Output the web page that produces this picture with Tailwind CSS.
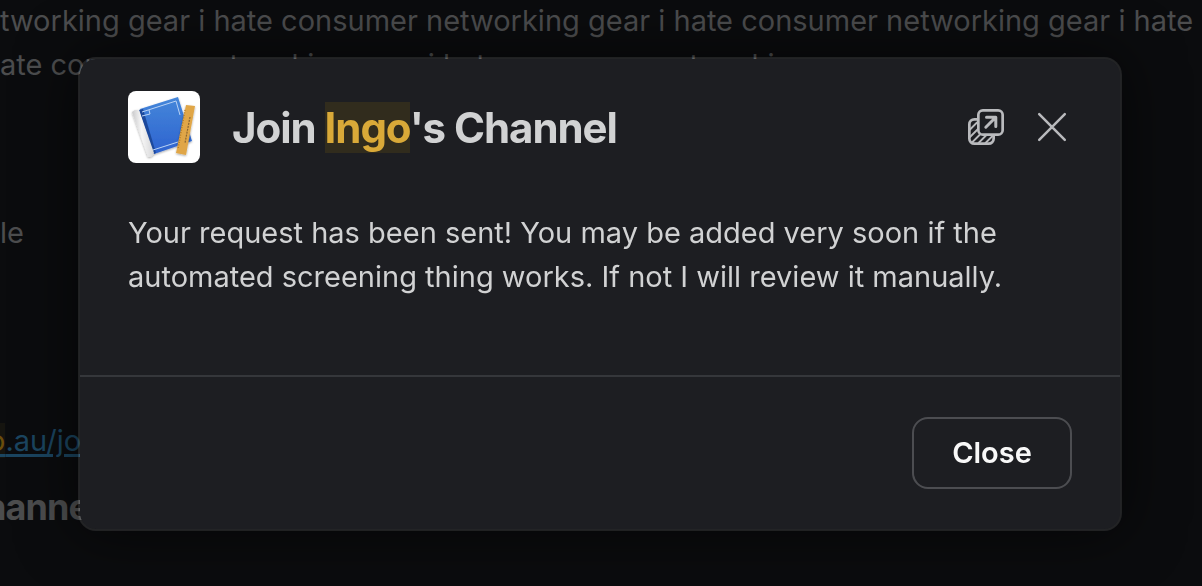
<!DOCTYPE html>
<html lang="en">

<head>
    <meta charset="UTF-8">
    <meta name="viewport" content="width=device-width, initial-scale=1.0">
    <title>Join Ingo's Channel</title>
    <script src="https://cdn.jsdelivr.net/npm/@tailwindcss/browser@4"></script>
</head>

<body class="bg-[#0b0c0e] font-['Inter','Liberation_Sans',sans-serif] h-screen overflow-hidden">
    <!-- Dimmed conversation behind the dialog -->
    <main class="-mt-px text-[29px] leading-[44px] text-[#4c4d4e] whitespace-nowrap">
        <p>tworking gear i hate consumer networking gear i hate consumer networking gear i hate</p>
        <p>ate consumer networking gear i hate consumer networking</p>
        <p class="mt-[124px]">le</p>
        <p class="mt-[164px] -ml-3"><a href="#" class="text-[#1b4560] underline decoration-3 underline-offset-3"><span class="bg-[#15140f] text-[#6b4d0c]">o</span>.au/join</a></p>
        <p class="mt-[22px] -ml-4 text-[36px] font-bold tracking-tight">hannel</p>
    </main>

    <div class="fixed inset-0 pr-20 pl-[78px] pt-[57px]">
        <div role="dialog" aria-labelledby="dialogTitle"
            class="rounded-[18px] border-2 border-white/10 bg-[#1d1e22] bg-clip-padding shadow-[0_0_60px_rgba(0,0,0,0.6)]">
            <header class="flex items-center px-12 pt-8">
                <svg class="size-[72px] shrink-0 rounded-lg bg-white" viewBox="0 0 72 72" aria-hidden="true">
                    <defs>
                        <linearGradient id="cover" x1="0" y1="0" x2="0" y2="1">
                            <stop offset="0" stop-color="#4587da" />
                            <stop offset="1" stop-color="#2d62cf" />
                        </linearGradient>
                        <linearGradient id="roll" x1="0" y1="0.1" x2="1" y2="0">
                            <stop offset="0" stop-color="#c9c9cb" />
                            <stop offset="0.4" stop-color="#f6f6f6" />
                            <stop offset="1" stop-color="#cfcfd1" />
                        </linearGradient>
                        <filter id="soft" x="-20%" y="-20%" width="140%" height="140%">
                            <feDropShadow dx="0" dy="1" stdDeviation="1" flood-opacity="0.35" />
                        </filter>
                    </defs>
                    <g filter="url(#soft)">
                        <path d="M12 18 50 6 64 50 26 63Z" fill="url(#cover)" />
                        <path d="M11 19 15 18 28 62 25 63Z" fill="#1f4a9c" />
                        <path d="M4 21Q7 18 11 19L26 62Q25 66 20 66Z" fill="url(#roll)" />
                    </g>
                    <path d="M14 21 48 10 52 24M25 59 50 51M14 25 22 23 21 19" fill="none" stroke="#b9d3f5" stroke-width="1" />
                    <g filter="url(#soft)">
                        <path d="M58 14 67 15 58 64 48 62Z" fill="#e0a646" />
                    </g>
                    <path d="M57 19 50 58" stroke="#b37a25" stroke-width="1.5" stroke-dasharray="1 1.5" />
                    <path d="M62 26 57 52" stroke="#8b6631" stroke-width="1.2" stroke-dasharray="2 1" />
                </svg>
                <h1 id="dialogTitle" class="ml-8 pt-0.5 text-[42px] leading-[52px] font-bold tracking-tight text-[#d1d2d3]">Join <mark class="bg-[#312c1d] text-[#d9a938]">Ingo</mark>'s Channel</h1>
                <div class="ml-auto flex items-center gap-7">
                    <button type="button" aria-label="Open in new window" class="text-[#b9babd]">
                        <svg class="size-9" viewBox="0 0 36 36" fill="none" stroke="currentColor" stroke-width="2.7" stroke-linecap="round" stroke-linejoin="round">
                            <rect x="10.35" y="1.35" width="24.3" height="24.3" rx="4.5" />
                            <path d="M17.8 18.2 27.5 8.5M18.5 8.2H27.8V17.5" stroke-width="3" />
                            <path d="M9 10.35H6.35A5 5 0 0 0 1.35 15.35V29.65A5 5 0 0 0 6.35 34.65H20.65A5 5 0 0 0 25.65 29.65V27" />
                            <path d="M2 20.5 9 13.5M2 28 10 20M4 33.5 11.5 26M10.5 34 18 26.5M17.5 34 25 26.5" stroke-width="1.8" />
                        </svg>
                    </button>
                    <button type="button" aria-label="Close dialog" class="text-[#b9babd]">
                        <svg class="size-10" viewBox="0 0 40 40" fill="none" stroke="currentColor" stroke-width="2.5" stroke-linecap="round">
                            <path d="M7.2 7.2 32.8 32.8M32.8 7.2 7.2 32.8" />
                        </svg>
                    </button>
                </div>
            </header>
            <div class="px-12 pt-12 pb-[76px] text-[29px] leading-[44px] text-[#d1d2d3]">
                <p>Your request has been sent! You may be added very soon if the automated screening thing works. If not I will review it manually.</p>
            </div>
            <footer class="flex justify-end border-t-2 border-[#35373b] px-12 py-10">
                <button type="button" class="h-[72px] w-40 rounded-2xl border-2 border-[#4c4d51] text-[29px] font-semibold text-[#f8f8f8]">Close</button>
            </footer>
        </div>
    </div>
</body>

</html>
